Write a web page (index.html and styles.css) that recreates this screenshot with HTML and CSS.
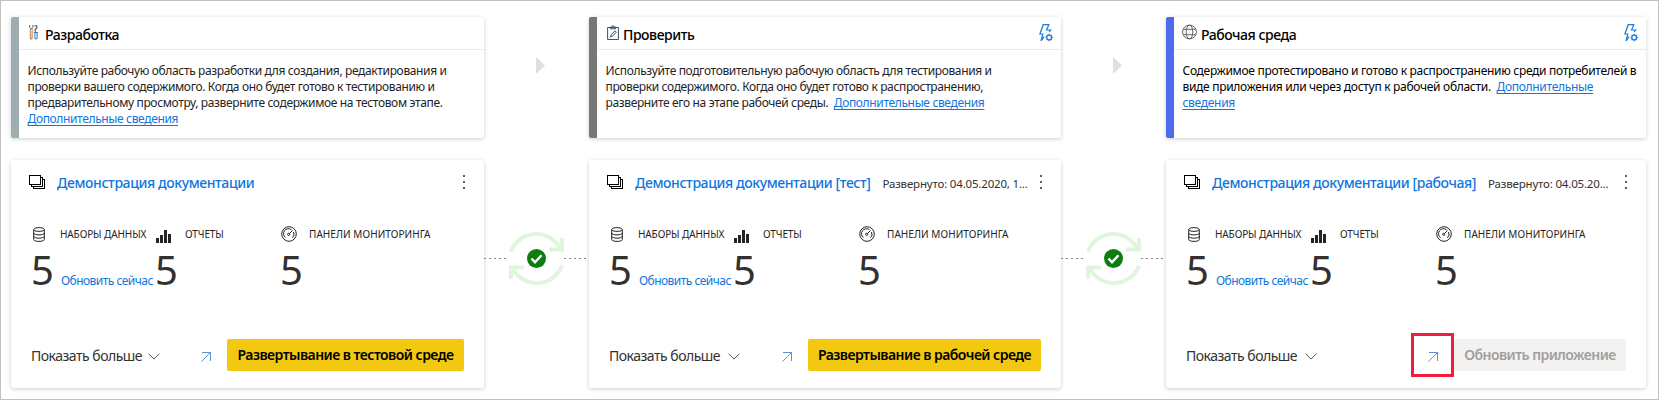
FILE: index.html
```
<!DOCTYPE html>
<html lang="ru">
<head>
<meta charset="utf-8">
<title>Конвейер развертывания</title>
<link rel="stylesheet" href="styles.css">
</head>
<body>
<svg class="sprite" aria-hidden="true">
  <symbol id="layers" viewBox="0 0 16 14"><path d="M.5.5h11v8.500H.5zM12 2.500h1.500v8.500H2.500V9.500M14 4.500h1.500v8.500h-11V11.500" fill="none" stroke="currentColor" stroke-width="1" shape-rendering="crispEdges"/></symbol>
  <symbol id="db" viewBox="0 0 12 15"><g fill="none" stroke="currentColor" stroke-width="1"><ellipse cx="6" cy="2.500" rx="5.300" ry="1.900"/><path d="M.7 2.500v10c0 2.500 10.600 2.500 10.600 0v-10M.7 6c0 2.500 10.600 2.500 10.600 0M.7 9.300c0 2.500 10.600 2.500 10.600 0"/></g></symbol>
  <symbol id="bars" viewBox="0 0 15 13"><path d="M0 8h3v5H0zM4 5h3v8H4zM8 0h3v13H8zM12 4h3v9h-3z" fill="currentColor"/></symbol>
  <symbol id="gauge" viewBox="0 0 16 16"><g fill="none" stroke="currentColor"><circle cx="8" cy="8" r="7.300"/><path d="M4.500 11.700a4.900 4.900 0 0 1 6-8M12.500 6a4.900 4.900 0 0 1-1 5.700M8.500 7.500l3-3"/><circle cx="7.700" cy="8.300" r="1.100"/></g></symbol>
  <symbol id="chev" viewBox="0 0 12 7"><path d="M.5.6 6 6.100 11.500.6" fill="none" stroke="currentColor"/></symbol>
  <symbol id="go" viewBox="0 0 10 10"><path d="M.5 9.500l9-9M1 .5h8.500V9" fill="none" stroke="currentColor" stroke-width=".9"/></symbol>
  <symbol id="dots" viewBox="0 0 2 15"><path d="M0 0h2v2H0zM0 6h2v2H0zM0 12h2v2H0z" fill="currentColor"/></symbol>
  <symbol id="rule" viewBox="0 0 14 18"><g fill="none" stroke="currentColor" stroke-width="1.200"><path d="M5.200 12.500L2 16.800 3.800 10H.9L4.200.7h5.600L7.600 6h4l-1.400 1.800"/><circle cx="10.200" cy="13.500" r="2.400"/><path d="M10.200 9.800v1.300M10.200 15.900v1.300M6.500 13.500h1.300M12.600 13.500h1.300M7.600 10.900l.9.900M11.900 15.200l.9.900M12.800 10.900l-.9.900M8.500 15.200l-.9.900"/></g></symbol>
  <symbol id="sync" viewBox="0 0 55 55"><g fill="none" stroke="#dff6dd" stroke-width="4"><path d="M2 20.500A27 27 0 0 1 51.500 18M40 18.500h13M53 7v13.500"/><path d="M53 34.500A27 27 0 0 1 3.500 37M15 36.500H2M2 48V34.500"/></g><circle cx="27.500" cy="27.500" r="9.500" fill="#107c10"/><path d="M22.500 27.500l3.500 3.700 6.500-7" fill="none" stroke="#fff" stroke-width="2.400"/></symbol>
</svg>
<main class="pipeline">
  <section class="stage dev">
    <header class="info">
      <div class="head"><svg class="stage-icon" viewBox="0 0 9 15"><g fill="none"><path d="M1.300 3.500V14h1.800V3.500" stroke="#c07a48"/><path d="M.6 0v2.500l1 1h1.300l1-1V0" stroke="#3c6d9e"/><path d="M5.500.8h2.300v3H6.200v3.500" stroke="#444"/><path d="M4.800 7.500H9M5.900 8v5.800h2.200V8" stroke="#3c7aa8"/></g></svg><h2>Разработка</h2></div>
      <p><span>Используйте рабочую область разработки для создания, редактирования и</span><br><span>проверки вашего содержимого. Когда оно будет готово к тестированию и</span><br><span>предварительному просмотру, разверните содержимое на тестовом этапе.</span><br><a>Дополнительные сведения</a></p>
    </header>
    <article class="card">
      <div class="title"><svg class="layers"><use href="#layers"/></svg><h3>Демонстрация документации</h3><svg class="dots"><use href="#dots"/></svg></div>
      <div class="stats">
        <div class="stat"><div class="label"><svg class="db"><use href="#db"/></svg>НАБОРЫ ДАННЫХ</div><div class="num"><b>5</b><a>Обновить сейчас</a></div></div>
        <div class="stat"><div class="label"><svg class="bars"><use href="#bars"/></svg>ОТЧЕТЫ</div><div class="num"><b>5</b></div></div>
        <div class="stat"><div class="label wide"><svg class="gauge"><use href="#gauge"/></svg>ПАНЕЛИ МОНИТОРИНГА</div><div class="num"><b>5</b></div></div>
      </div>
      <footer><span class="more">Показать больше</span><svg class="chev"><use href="#chev"/></svg><span class="open"><svg><use href="#go"/></svg></span><button>Развертывание в тестовой среде</button></footer>
    </article>
  </section>

  <div class="link"><i class="tri"></i><div class="flow"><i class="dash"></i><svg><use href="#sync"/></svg><i class="dash"></i></div></div>

  <section class="stage test">
    <header class="info">
      <div class="head"><svg class="stage-icon" viewBox="0 0 12 15"><g fill="none" stroke="#3d5268"><path d="M.6 2.500h10.800v12H.6z"/><path d="M3.500 3.800V2h1.300C5 .2 7 .2 7.200 2h1.300v1.800zM3.500 12l.6-2.200L8 5.800l1.300 1.400-3.800 4z"/></g></svg><h2>Проверить</h2><svg class="rule"><use href="#rule"/></svg></div>
      <p><span>Используйте подготовительную рабочую область для тестирования и</span><br><span>проверки содержимого. Когда оно будет готово к распространению,</span><br><span>разверните его на этапе рабочей среды.&nbsp; <a>Дополнительные сведения</a></span></p>
    </header>
    <article class="card">
      <div class="title"><svg class="layers"><use href="#layers"/></svg><h3>Демонстрация документации [тест]</h3><span class="date">Развернуто: 04.05.2020, 1...</span><svg class="dots"><use href="#dots"/></svg></div>
      <div class="stats">
        <div class="stat"><div class="label"><svg class="db"><use href="#db"/></svg>НАБОРЫ ДАННЫХ</div><div class="num"><b>5</b><a>Обновить сейчас</a></div></div>
        <div class="stat"><div class="label"><svg class="bars"><use href="#bars"/></svg>ОТЧЕТЫ</div><div class="num"><b>5</b></div></div>
        <div class="stat"><div class="label wide"><svg class="gauge"><use href="#gauge"/></svg>ПАНЕЛИ МОНИТОРИНГА</div><div class="num"><b>5</b></div></div>
      </div>
      <footer><span class="more">Показать больше</span><svg class="chev"><use href="#chev"/></svg><span class="open"><svg><use href="#go"/></svg></span><button>Развертывание в рабочей среде</button></footer>
    </article>
  </section>

  <div class="link"><i class="tri"></i><div class="flow"><i class="dash"></i><svg><use href="#sync"/></svg><i class="dash"></i></div></div>

  <section class="stage prod">
    <header class="info">
      <div class="head"><svg class="stage-icon" viewBox="0 0 15 16"><g fill="none" stroke="#555" stroke-width=".9"><circle cx="7.500" cy="8" r="6.900"/><ellipse cx="7.500" cy="8" rx="3.300" ry="6.900"/><path d="M1.300 5.300h12.400M1.300 10.700h12.400"/></g></svg><h2>Рабочая среда</h2><svg class="rule"><use href="#rule"/></svg></div>
      <p><span>Содержимое протестировано и готово к распространению среди потребителей в</span><br><span>виде приложения или через доступ к рабочей области.&nbsp; <a>Дополнительные</a></span><br><a>сведения</a></p>
    </header>
    <article class="card">
      <div class="title"><svg class="layers"><use href="#layers"/></svg><h3>Демонстрация документации [рабочая]</h3><span class="date">Развернуто: 04.05.20...</span><svg class="dots"><use href="#dots"/></svg></div>
      <div class="stats">
        <div class="stat"><div class="label"><svg class="db"><use href="#db"/></svg>НАБОРЫ ДАННЫХ</div><div class="num"><b>5</b><a>Обновить сейчас</a></div></div>
        <div class="stat"><div class="label"><svg class="bars"><use href="#bars"/></svg>ОТЧЕТЫ</div><div class="num"><b>5</b></div></div>
        <div class="stat"><div class="label wide"><svg class="gauge"><use href="#gauge"/></svg>ПАНЕЛИ МОНИТОРИНГА</div><div class="num"><b>5</b></div></div>
      </div>
      <footer><span class="more">Показать больше</span><svg class="chev"><use href="#chev"/></svg><span class="open marked"><svg><use href="#go"/></svg></span><button disabled>Обновить приложение</button></footer>
    </article>
  </section>
</main>
</body>
</html>
```

FILE: styles.css
```
* { box-sizing: border-box; margin: 0; padding: 0; }
body { background: #fff; font-family: "Noto Sans", "Open Sans", sans-serif; color: #252423; }
svg { display: block; flex: none; }
.sprite { position: absolute; width: 0; height: 0; }
.pipeline { width: 1659px; height: 400px; border: 1px solid #c1c1c1; padding: 16px 0 0 10px; display: grid; grid-template-columns: 473px 105px 472px 105px 480px; align-content: start; overflow: hidden; }
.stage { min-width: 0; white-space: nowrap; }
.info { height: 121px; border-left: 8px solid #9fadb1; border-radius: 2px; box-shadow: 0 1px 4px rgba(0,0,0,.2); }
.test .info { border-left-color: #797775; }
.prod .info { border-left-color: #4f6bed; }
.head { height: 33px; border-bottom: 1px solid #eaeaea; display: flex; align-items: center; padding: 0 8px 0 10px; }
.prod .head { padding-left: 8px; }
.stage-icon { width: 9px; height: 15px; margin-top: -2px; }
.test .stage-icon { width: 12px; }
.prod .stage-icon { width: 15px; height: 16px; }
h2 { font-size: 14px; line-height: 20px; font-weight: 500; color: #000; margin: 3px 0 0 7px; letter-spacing: -.45px; }
.test h2 { margin-left: 4px; }
.prod h2 { margin-left: 4px; }
.rule { width: 14px; height: 18px; margin-left: auto; color: #1a7bdc; }
.info p { font-size: 12px; line-height: 16px; padding: 13px 0 0 8.500px; letter-spacing: -.36px; }
.prod .info p { color: #000; letter-spacing: -.3px; }
a { color: #0f76dc; }
.info a { text-decoration: underline; text-underline-offset: 2px; }
.card { height: 228px; margin-top: 22px; border-radius: 3px; box-shadow: 0 1px 4px rgba(0,0,0,.2); padding-left: 18px; padding-right: 20px; }
.title { height: 46px; display: flex; align-items: center; }
.layers { width: 16px; height: 14px; margin-top: -2px; color: #000; }
h3 { font-size: 14px; line-height: 20px; font-weight: 500; color: #0f76dc; margin-left: 12px; letter-spacing: -.4px; }
.date { font-size: 11.5px; margin-left: 12px; letter-spacing: -.18px; color: #323130; }
.dots { width: 2px; height: 15px; margin: -1px -1px 0 auto; color: #605e5c; }
.stats { display: grid; grid-template-columns: 123px 125px 1fr; height: 103px; padding: 18px 0 0 4px; }
.label { display: flex; align-items: center; height: 20px; font-size: 10px; letter-spacing: -.1px; }
.label.wide { letter-spacing: .07px; }
.db { width: 12px; height: 15px; margin-right: 15px; }
.bars { width: 15px; height: 13px; margin-right: 14px; margin-top: 4px; }
.gauge { width: 16px; height: 16px; margin-right: 12px; }
.num { display: flex; align-items: baseline; height: 46px; margin: 3px 0 0 -1px; }
.stat:first-child .num { margin-left: -2px; }
.num b { font-size: 40px; line-height: 46px; font-weight: 400; color: #323130; }
.num a { font-size: 12px; margin-left: 7px; letter-spacing: -.52px; }
footer { display: flex; align-items: center; height: 44px; margin-top: 24px; padding-left: 2px; }
.more { font-size: 14px; letter-spacing: -.5px; color: #323130; }
.chev { width: 12px; height: 7px; margin-left: 8px; margin-top: 3px; color: #555; }
.dev .chev { margin-left: 6px; }
.open { width: 43px; height: 44px; margin-left: auto; display: grid; place-items: center; color: #4c86c9; }
.open svg { width: 10px; height: 10px; margin-top: 3px; }
.open.marked { border: 3px solid #f01e3c; }
button { width: 237px; height: 32px; border: 0; border-radius: 2px; background: #f2c811; color: #000; font: 600 14px/20px "Noto Sans", "Open Sans", sans-serif; letter-spacing: -.53px; white-space: nowrap; }
.test button { width: 233px; }
.prod button { width: 172px; background: #f3f2f1; color: #a19f9d; }
.link { padding-top: 40px; }
.tri { display: block; margin-left: 52px; width: 9px; height: 17px; background: #e1dfdd; clip-path: polygon(0 0, 100% 50%, 0 100%); }
.flow { display: flex; align-items: center; margin-top: 157px; height: 55px; }
.flow svg { width: 55px; height: 55px; margin-left: 3px; }
.dash { width: 22px; height: 1px; background: repeating-linear-gradient(90deg, #8a8886 0 2px, transparent 2px 5px); }
```
